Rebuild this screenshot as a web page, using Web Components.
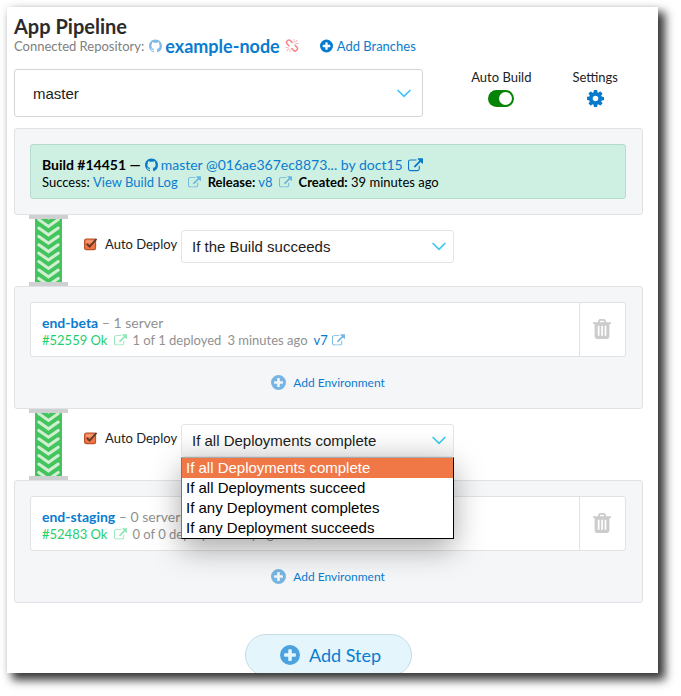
<!DOCTYPE html>
<html lang="en">
<head>
<meta charset="utf-8">
<title>App Pipeline</title>
<style>
  html, body { margin: 0; height: 100%; background: #fff; }
  body { font-family: Lato, "Liberation Sans", sans-serif; font-size: 14px; color: #222; }
</style>
</head>
<body>
<app-sheet>
  <pipeline-header></pipeline-header>
  <branch-bar></branch-bar>
  <pipeline-panel><build-card></build-card></pipeline-panel>
  <deploy-rule value="If the Build succeeds"></deploy-rule>
  <pipeline-panel>
    <environment-card name="end-beta" servers="1 server" deploy="#52559 Ok" count="1 of 1 deployed" age="3 minutes ago" release="v7"></environment-card>
    <add-button slot="action">Add Environment</add-button>
  </pipeline-panel>
  <deploy-rule value="If all Deployments complete" open></deploy-rule>
  <pipeline-panel>
    <environment-card name="end-staging" servers="0 servers" deploy="#52483 Ok" count="0 of 0 deployed" age="a day ago" release="v7"></environment-card>
    <add-button slot="action">Add Environment</add-button>
  </pipeline-panel>
  <add-button class="step" large>Add Step</add-button>
</app-sheet>

<script>
const ICONS = {
  github: ['0 0 16 16', '<path d="M8 0C3.58 0 0 3.58 0 8c0 3.54 2.29 6.53 5.47 7.59.4.07.55-.17.55-.38 0-.19-.01-.82-.01-1.49-2.01.37-2.53-.49-2.69-.94-.09-.23-.48-.94-.82-1.13-.28-.15-.68-.52-.01-.53.63-.01 1.08.58 1.23.82.72 1.21 1.87.87 2.33.66.07-.52.28-.87.51-1.07-1.78-.2-3.64-.89-3.64-3.95 0-.87.31-1.59.82-2.15-.08-.2-.36-1.02.08-2.12 0 0 .67-.21 2.2.82.64-.18 1.32-.27 2-.27.68 0 1.36.09 2 .27 1.53-1.04 2.2-.82 2.2-.82.44 1.1.16 1.92.08 2.12.51.56.82 1.27.82 2.15 0 3.07-1.87 3.75-3.65 3.95.29.25.54.73.54 1.48 0 1.07-.01 1.93-.01 2.2 0 .21.15.46.55.38A8.013 8.013 0 0016 8c0-4.42-3.58-8-8-8z"/>'],
  plus: ['0 0 16 16', '<path fill-rule="evenodd" d="M8 0a8 8 0 1 0 0 16A8 8 0 0 0 8 0zM7.2 3.3h1.6q.6 0 .6.6v2.7h2.7q.6 0 .6.6v1.6q0 .6-.6.6H9.400v2.700q0 .6-.6.6H7.200q-.6 0-.6-.6V9.400H3.900q-.6 0-.6-.6V7.200q0-.6.6-.6h2.700V3.900q0-.6.6-.6z"/>'],
  gear: ['128 128 1536 1536', '<path d="M1152 896q0-106-75-181t-181-75-181 75-75 181 75 181 181 75 181-75 75-181zm512-109v222q0 12-8 23t-20 13l-185 28q-19 54-39 91 35 50 107 138 10 12 10 25t-9 23q-27 37-99 108t-94 71q-12 0-26-9l-138-108q-44 23-91 38-16 136-29 186-7 28-36 28h-222q-14 0-24.500-8.500t-11.500-21.500l-28-184q-49-16-90-37l-141 107q-10 9-25 9-14 0-25-11-126-114-165-168-7-10-7-23 0-12 8-23 15-21 51-66.500t54-70.500q-27-50-41-99l-183-27q-13-2-21-12.500t-8-23.500v-222q0-12 8-23t19-13l186-28q14-46 39-92-40-57-107-138-10-12-10-24 0-10 9-23 26-36 98.500-107.500t94.500-71.500q13 0 26 10l138 107q44-23 91-38 16-136 29-186 7-28 36-28h222q14 0 24.500 8.500t11.500 21.500l28 184q49 16 90 37l142-107q9-9 24-9 13 0 25 10 129 119 165 170 7 8 7 22 0 12-8 23-15 21-51 66.500t-54 70.500q26 50 41 98l183 28q13 2 21 12.500t8 23.500z"/>'],
  external: ['0 0 1792 1600', '<path d="M1408 928v320q0 119-84.500 203.500t-203.500 84.500h-832q-119 0-203.500-84.500t-84.500-203.500v-832q0-119 84.500-203.500t203.500-84.500h704q14 0 23 9t9 23v64q0 14-9 23t-23 9h-704q-66 0-113 47t-47 113v832q0 66 47 113t113 47h832q66 0 113-47t47-113v-320q0-14 9-23t23-9h64q14 0 23 9t9 23zm384-864v512q0 26-19 45t-45 19-45-19l-176-176-652 652q-10 10-23 10t-23-10l-114-114q-10-10-10-23t10-23l652-652-176-176q-19-19-19-45t19-45 45-19h512q26 0 45 19t19 45z"/>'],
  unlink: ['64 0 1664 1792', '<path d="M503 1271l-256 256q-10 9-23 9-12 0-23-9-9-10-9-23t9-23l256-256q10-9 23-9t23 9q9 10 9 23t-9 23zm169 41v320q0 14-9 23t-23 9-23-9-9-23v-320q0-14 9-23t23-9 23 9 9 23zm-224-224q0 14-9 23t-23 9h-320q-14 0-23-9t-9-23 9-23 23-9h320q14 0 23 9t9 23zm1264 128q0 120-85 203l-147 146q-83 83-203 83-121 0-204-85l-334-335q-21-21-42-56l239-18 273 274q27 27 68 27.500t68-26.500l147-146q28-28 28-67 0-40-28-68l-274-275 18-239q35 21 56 42l336 336q84 86 84 204zm-617-724l-239 18-273-274q-28-28-68-28-39 0-68 27l-147 146q-28 28-28 67 0 40 28 68l274 274-18 240q-35-21-56-42l-336-336q-84-86-84-204 0-120 85-203l147-146q83-83 203-83 121 0 204 85l334 335q21 21 42 56zm633 84q0 14-9 23t-23 9h-320q-14 0-23-9t-9-23 9-23 23-9h320q14 0 23 9t9 23zm-544-544v320q0 14-9 23t-23 9-23-9-9-23v-320q0-14 9-23t23-9 23 9 9 23zm407 151l-256 256q-11 9-23 9t-23-9q-9-10-9-23t9-23l256-256q10-9 23-9t23 9q9 10 9 23t-9 23z"/>'],
  trash: ['0 0 18 20', '<path fill-rule="evenodd" d="M0 3.200h4.600l1-2.300Q6 0 7 0h4q1 0 1.400.9l1 2.300H18v1.900h-1.600v12.500q0 2.400-2.200 2.400H3.800q-2.200 0-2.200-2.400V5.100H0zM6.700 3.200h4.600l-.6-1.400H7.300zM4.800 6.800v10h1.700v-10zm3.400 0v10h1.700v-10zm3.400 0v10h1.700v-10z"/>'],
  chevron: ['0 0 14 9', '<path fill="none" stroke="#3dc6f3" stroke-width="1.700" d="M.6 1 7 7.300 13.400 1"/>'],
  check: ['0 0 15 14', '<rect x=".6" y="1.600" width="11.800" height="11.400" rx="1.800" fill="#ef7443" stroke="#b9532c" stroke-width="1.200"/><path d="M2 3h9v3H2z" fill="#f79a6d"/><path fill="none" stroke="#5d3a2e" stroke-width="2" d="M3 6.800 6 9.900 13.400 1.400"/>'],
};

const define = (tag, css, html) => {
  customElements.define(tag, class extends HTMLElement {
    connectedCallback() {
      if (this.shadowRoot) return;
      const root = this.attachShadow({ mode: 'open' });
      const body = typeof html === 'function' ? html(this) : html;
      root.innerHTML = `<style>*{box-sizing:border-box}a{color:#0a7cd0;text-decoration:none}${css}</style>${body}`;
    }
  });
};

define('app-icon', `
  :host { display: inline-block; width: 14px; height: 14px; flex: none; }
  svg { display: block; width: 100%; height: 100%; fill: currentColor; }`,
  el => { const [box, art] = ICONS[el.getAttribute('name')]; return `<svg viewBox="${box}" aria-hidden="true">${art}</svg>`; });

define('app-sheet', `
  :host { display: block; box-sizing: border-box; height: 100vh; padding: 7px 23px 23px 7px; overflow: hidden; }
  main { height: 100%; overflow: hidden; padding: 8px 15px 0 7px; background: #fff; }
  .shade { height: 100%; box-shadow: 6px 6px 9px 1px rgba(0,0,0,.78), 0 0 8px rgba(0,0,0,.07); }
  ::slotted(.step) { margin-top: 31px; }`,
  `<div class="shade"><main><slot></slot></main></div>`);

define('pipeline-header', `
  :host { display: block; margin-bottom: 14px; }
  h1 { margin: 0; font-size: 20px; line-height: 22px; font-weight: 700; color: #2b2b2b; }
  div { display: flex; align-items: center; height: 18px; color: #808080; font-size: 13px; }
  .repo { font-size: 18px; font-weight: 700; margin: 0 5px 0 3px; }
  .gh { color: #80bbe7; margin-left: 5px; width: 13px; }
  .un { color: #f58088; }
  .add { display: flex; align-items: center; gap: 4px; margin-left: 21px; color: #0a7cd0; }
  .add app-icon { width: 13px; color: #087acb; }`,
  `<h1>App Pipeline</h1>
   <div><span>Connected Repository:</span><app-icon class="gh" name="github"></app-icon><a class="repo" href="#repo">example-node</a><app-icon class="un" name="unlink"></app-icon><a class="add" href="#branches"><app-icon name="plus"></app-icon>Add Branches</a></div>`);

define('select-box', `
  :host { display: grid; align-items: center; font: 15px "Liberation Sans", Arial, sans-serif; }
  select { grid-area: 1 / 1; width: 100%; height: 100%; appearance: none; border: 1px solid #e2e4e6; border-color: var(--select-line, #e2e4e6); border-radius: 3px; background: var(--select-fill, #fff); color: #1c1c1c; font: inherit; padding: 0 30px 0 var(--select-pad, 10px); }
  app-icon { grid-area: 1 / 1; justify-self: end; margin-right: var(--select-end, 8px); width: 14px; height: 9px; pointer-events: none; }`,
  el => `<select aria-label="${el.getAttribute('label')}">${el.getAttribute('options').split('|').map(o => `<option${o === el.getAttribute('value') ? ' selected' : ''}>${o}</option>`).join('')}</select><app-icon name="chevron"></app-icon>`);

define('branch-bar', `
  :host { display: flex; justify-content: space-between; margin-bottom: 11px; }
  select-box { width: 65%; height: 48px; --select-pad: 18px; --select-end: 12px; --select-line: #d3d5d7; }
  .tools { display: flex; gap: 41px; padding-right: 25px; font-size: 13px; }
  .tool { display: flex; flex-direction: column; align-items: center; gap: 4px; line-height: 17px; color: #222; }
  input { appearance: none; margin: 0; width: 26px; height: 17px; border-radius: 9px; background: #078407; padding: 2px; display: flex; justify-content: flex-end; }
  input::before { content: ""; width: 13px; height: 13px; border-radius: 50%; background: #fff; }
  button { border: 0; background: none; padding: 0; font: inherit; }
  button app-icon { width: 17px; height: 17px; color: #087acb; }`,
  `<select-box label="Branch" options="master" value="master"></select-box>
   <div class="tools">
     <label class="tool">Auto Build<input type="checkbox" role="switch" checked></label>
     <button class="tool" type="button">Settings<app-icon name="gear"></app-icon></button>
   </div>`);

define('pipeline-panel', `
  :host { display: block; box-sizing: border-box; border: 1px solid #e0e2e5; border-radius: 3px; background: #f5f6f8; padding: 15px 16px 15px 15px; }
  ::slotted([slot=action]) { margin-top: 16px; }`,
  `<slot></slot><slot name="action"></slot>`);

define('build-card', `
  :host { display: block; border: 1px solid #b4dccb; border-radius: 3px; background: #cef0e2; padding: 11px 11px 8px; color: #000; box-sizing: border-box; }
  div { display: flex; align-items: center; height: 17px; font-size: 13px; white-space: pre; }
  .first { font-size: 14px; }
  .gh { width: 13px; color: #087acb; margin: 0 3px 0 4px; }
  .go { margin-left: 5px; color: #087acb; width: 15px; }
  .soft { width: 13px; height: 12px; color: #6bb5dd; margin: 0 7px 0 6px; }
  .log { margin-left: 10px; }
  .rel { margin-left: 3px; }`,
  `<div class="first"><b>Build #14451 —</b><app-icon class="gh" name="github"></app-icon><a href="#commit">master @016ae367ec8873... by doct15</a><app-icon class="go" name="external"></app-icon></div>
   <div>Success: <a href="#log">View Build Log</a><app-icon class="soft log" name="external"></app-icon><b>Release:</b><a class="rel" href="#v8">v8</a><app-icon class="soft" name="external"></app-icon><b>Created:</b> 39 minutes ago</div>`);

define('environment-card', `
  :host { display: flex; box-sizing: border-box; border: 1px solid #e0e2e5; border-radius: 3px; background: #fff; color: #919191; }
  .text { flex: 1; min-width: 0; padding: 11px 11px 8px; }
  .text div { display: flex; align-items: center; height: 17px; font-size: 13px; white-space: pre; }
  .text .first { font-size: 14px; }
  .name { font-weight: 700; }
  .ok { color: #1fce6d; }
  .ext { width: 13px; height: 12px; margin: 0 5px 0 7px; color: #8fe6b6; }
  .age { margin: 0 6px; }
  .rel + .ext { margin-left: 4px; color: #76b6e4; }
  button { width: 46px; border: 0; border-left: 1px solid #e0e2e5; background: none; display: grid; place-items: center; padding: 0 2px 2px 0; color: #ccc; }
  button app-icon { width: 18px; height: 20px; }`,
  el => { const v = n => el.getAttribute(n); return `
   <div class="text"><div class="first"><a class="name" href="#env">${v('name')}</a> – ${v('servers')}</div>
   <div><a class="ok" href="#deploy">${v('deploy')}</a><app-icon class="ext" name="external"></app-icon><span>${v('count')}</span><span class="age">${v('age')}</span><a class="rel" href="#release">${v('release')}</a><app-icon class="ext" name="external"></app-icon></div></div>
   <button type="button" aria-label="Delete ${v('name')}"><app-icon name="trash"></app-icon></button>`; });

define('add-button', `
  :host { display: flex; justify-content: center; }
  button { display: flex; align-items: center; gap: 7px; height: 18px; margin-bottom: 2px; padding: 0; border: 0; background: none; color: #0a7cd0; font: 12px Lato, sans-serif; }
  app-icon { width: 15px; height: 15px; color: #78b5e3; }
  :host([large]) button { height: 42px; padding: 0 30px 0 34px; gap: 9px; border: 1px solid #c5dce6; border-radius: 21px; background: #e4f5fc; font-size: 18px; }
  :host([large]) app-icon { width: 20px; height: 20px; color: #4ba2de; }`,
  `<button type="button"><app-icon name="plus"></app-icon><slot></slot></button>`);

define('conveyor-belt', `
  :host { display: flex; flex-direction: column; align-items: center; width: 39px; border: solid #cfd0d1; border-width: 4px 0; }
  svg { display: block; width: 27px; height: 63px; background: #43c45c; }`,
  () => `<svg viewBox="0 0 27 63" aria-hidden="true"><g fill="none" stroke="#d2efd3" stroke-width="3" stroke-linecap="round">${
    Array.from({ length: 9 }, (_, i) => `<path d="M3.800 ${(i * 8.4 - 7.800).toFixed(1)}l9.700 6.800 9.700-6.800"/>`).join('')}</g></svg>`);

const RULES = ['If all Deployments complete', 'If all Deployments succeed', 'If any Deployment completes', 'If any Deployment succeeds'];
define('deploy-rule', `
  :host { display: flex; align-items: flex-start; padding-left: 15px; position: relative; }
  :host([open]) { z-index: 1; }
  label { display: flex; align-items: center; gap: 7px; width: 97px; height: 27px; margin: 15px 0 0 16px; font-size: 13px; white-space: nowrap; color: #222; }
  .box { display: grid; }
  .box > * { grid-area: 1 / 1; width: 14px; height: 14px; margin: 0; }
  .box input { opacity: 0; }
  .box app-icon { pointer-events: none; }
  .field { position: relative; width: 273px; margin-top: 15px; }
  select-box { height: 33px; }
  :host([open]) select-box { --select-fill: linear-gradient(#fff 20%, #f2f2f2); }
  ul { position: absolute; top: 33px; left: 0; right: 0; margin: 0; padding: 0; list-style: none; border: 1px solid #000; border-color: #aaa #000 #000 #777; background: #fff; color: #000; font: 15px/20px "Liberation Sans", Arial, sans-serif; box-shadow: 0 10px 30px rgba(0,0,0,.34); }
  li { padding-left: 4px; }
  li[aria-selected=true] { background: #f07746; color: #fff; }`,
  el => { const v = el.getAttribute('value'), open = el.hasAttribute('open');
    return `<conveyor-belt></conveyor-belt>
    <label><span class="box"><input type="checkbox" checked><app-icon name="check"></app-icon></span>Auto Deploy</label>
    <div class="field"><select-box label="Deploy condition" options="${open ? RULES.join('|') : v}" value="${v}"></select-box>
    ${open ? `<ul role="listbox" aria-label="Deploy condition">${RULES.map(r => `<li role="option" aria-selected="${r === v}">${r}</li>`).join('')}</ul>` : ''}</div>`; });
</script>
</body>
</html>
